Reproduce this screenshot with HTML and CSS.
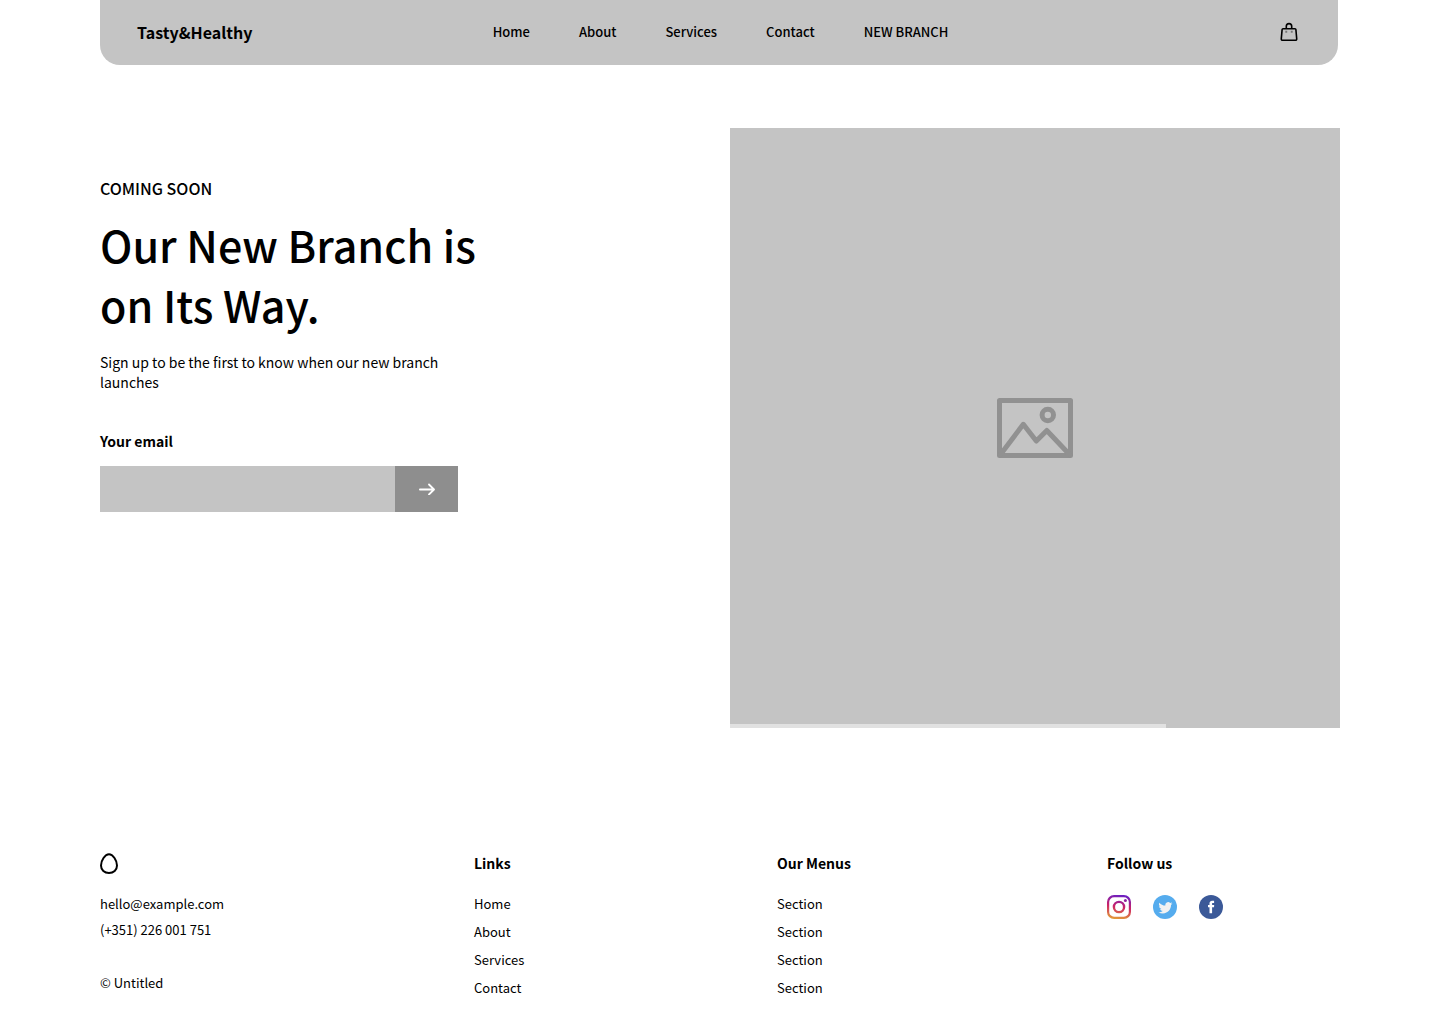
FILE: index.html
```html
<!DOCTYPE html>
<html lang="en">
<head>
<meta charset="utf-8">
<meta name="viewport" content="width=device-width, initial-scale=1">
<title>Tasty&amp;Healthy</title>
<link rel="stylesheet" href="styles.css">
</head>
<body>
<div class="page">
  <header class="header">
    <a class="brand" href="#">Tasty&amp;Healthy</a>
    <nav class="nav" aria-label="Main">
      <a href="#">Home</a>
      <a href="#">About</a>
      <a href="#">Services</a>
      <a href="#">Contact</a>
      <a href="#">NEW BRANCH</a>
    </nav>
    <button class="bag" type="button" aria-label="Shopping bag">
      <svg width="18" height="20" viewBox="0 0 18 20" fill="none" stroke="#000" stroke-width="1.6" stroke-linejoin="round">
        <path d="M3 6.800h12q.8 0 .9.800l.8 9.200q.1 1.500-1.400 1.500H2.700q-1.500 0-1.400-1.500l.8-9.200q.1-.8.900-.8z"/>
        <path d="M6.300 6.800V4.300a2.700 2.700 0 0 1 5.400 0v2.500"/>
        <path d="M5.300 9.700h1.900M10.800 9.700h1.900" stroke="#777" stroke-width="1.900"/>
      </svg>
    </button>
  </header>

  <main class="hero">
    <section class="intro">
      <p class="eyebrow">COMING SOON</p>
      <h1 class="title">Our New Branch is on Its Way.</h1>
      <p class="lead">Sign up to be the first to know when our new branch launches</p>
      <form class="signup">
        <label class="signup-label" for="email">Your email</label>
        <div class="signup-row">
          <input class="signup-input" id="email" type="email">
          <button class="signup-button" type="submit" aria-label="Sign up">
            <svg width="16" height="12" viewBox="0 0 16 12" fill="none" stroke="#fff" stroke-width="1.8" stroke-linecap="round" stroke-linejoin="round">
              <path d="M.9 6.500h14M10 1.500l5 5-5 5"/>
            </svg>
          </button>
        </div>
      </form>
    </section>
    <div class="picture">
      <svg width="76" height="60" viewBox="0 0 76 60" fill="none" stroke="#919191" stroke-width="5" stroke-linejoin="round" stroke-linecap="round">
        <rect x="2.500" y="2.500" width="71" height="55"/>
        <circle cx="50.800" cy="17" r="5.700"/>
        <path d="M3.500 56.500 26.300 26.300 39.300 43 49.800 32.500 72.500 56.500"/>
      </svg>
      <div class="progress"></div>
    </div>
  </main>

  <footer class="footer">
    <div class="contact">
      <svg class="egg" width="18" height="24" viewBox="0 0 18 24" fill="none" stroke="#000" stroke-width="2">
        <path d="M9 3.200C5 3.200 1 9.700 1 14.400 1 19 4.500 22 9 22s8-3 8-7.600C17 9.700 13 3.200 9 3.200z"/>
      </svg>
      <address class="details">
        <a href="mailto:hello@example.com">hello@example.com</a>
        <a href="tel:+351226001751">(+351) 226 001 751</a>
      </address>
      <p class="copyright">© Untitled</p>
    </div>
    <nav aria-labelledby="links">
      <h2 class="heading" id="links">Links</h2>
      <ul class="list">
        <li><a href="#">Home</a></li>
        <li><a href="#">About</a></li>
        <li><a href="#">Services</a></li>
        <li><a href="#">Contact</a></li>
      </ul>
    </nav>
    <nav aria-labelledby="menus">
      <h2 class="heading" id="menus">Our Menus</h2>
      <ul class="list">
        <li><a href="#">Section</a></li>
        <li><a href="#">Section</a></li>
        <li><a href="#">Section</a></li>
        <li><a href="#">Section</a></li>
      </ul>
    </nav>
    <section>
      <h2 class="heading">Follow us</h2>
      <div class="social">
        <a href="#" aria-label="Instagram">
          <svg width="24" height="24" viewBox="0 0 24 24" fill="none">
            <defs>
              <linearGradient id="insta" gradientUnits="userSpaceOnUse" x1="14" y1="0" x2="10" y2="24">
                <stop offset="0" stop-color="#6a1fc4"/>
                <stop offset=".5" stop-color="#cc2366"/>
                <stop offset="1" stop-color="#e29a37"/>
              </linearGradient>
            </defs>
            <rect x="1.100" y="1.100" width="21.800" height="21.800" rx="6" stroke="url(#insta)" stroke-width="2.200"/>
            <circle cx="12" cy="12" r="5.100" stroke="url(#insta)" stroke-width="2.400"/>
            <circle cx="18.400" cy="5.600" r="1.500" fill="url(#insta)"/>
          </svg>
        </a>
        <a href="#" aria-label="Twitter">
          <svg width="24" height="24" viewBox="0 0 24 24">
            <circle cx="12" cy="12" r="12" fill="#55acee"/>
            <path fill="#f1f2f2" transform="translate(5.500 5.800) scale(.58)" d="M23.950 4.570a10 10 0 0 1-2.820.770 4.960 4.960 0 0 0 2.160-2.720c-.950.550-2 .950-3.130 1.180a4.920 4.920 0 0 0-8.380 4.480C7.690 8.090 4.070 6.130 1.640 3.160a4.920 4.920 0 0 0 1.520 6.570 4.900 4.900 0 0 1-2.230-.610v.060a4.920 4.920 0 0 0 3.950 4.830 5 5 0 0 1-2.210.080 4.940 4.940 0 0 0 4.600 3.420A9.870 9.870 0 0 1 0 19.540a13.990 13.990 0 0 0 7.550 2.210c9.050 0 14-7.500 14-13.980 0-.210 0-.420-.020-.630a9.940 9.940 0 0 0 2.460-2.550z"/>
          </svg>
        </a>
        <a href="#" aria-label="Facebook">
          <svg width="24" height="24" viewBox="0 0 24 24">
            <circle cx="12" cy="12" r="12" fill="#3b5998"/>
            <path fill="#fff" d="M15 12.300h-1.900v5.900h-2.600v-5.900H9V9.900h1.500V8.500c0-1.200.6-2.700 2.700-2.700h1.900v2.200h-1.400c-.3 0-.6.100-.6.600v1.300h2.100z"/>
          </svg>
        </a>
      </div>
    </section>
  </footer>
</div>
</body>
</html>
```
FILE: styles.css
```css
* {
  box-sizing: border-box;
}

body {
  margin: 0;
  background: #fff;
  color: #000;
  font: 400 13px/20px "Noto Sans CJK SC", sans-serif;
}

h1, h2, p, ul {
  margin: 0;
  padding: 0;
}

ul {
  list-style: none;
}

a {
  color: inherit;
  text-decoration: none;
}

button {
  padding: 0;
  border: 0;
  background: none;
  cursor: pointer;
}

svg {
  display: block;
}

.page {
  padding: 0 100px;
}

.header {
  display: grid;
  grid-template-columns: 1fr auto 1fr;
  align-items: center;
  margin-right: 2px;
  padding: 20px 40px 21px 37px;
  border-radius: 0 0 20px 20px;
  background: #c4c4c4;
}

.brand {
  font-size: 16px;
  line-height: 24px;
  font-weight: 700;
}

.nav {
  display: flex;
  gap: 49px;
  padding-left: 6px;
  font-weight: 500;
}

.bag {
  justify-self: end;
}

.hero {
  display: grid;
  grid-template-columns: 63fr 61fr;
  margin-top: 63px;
}

.intro {
  padding-top: 48px;
}

.eyebrow {
  font-size: 16px;
  line-height: 24px;
  font-weight: 500;
}

.title {
  max-width: 400px;
  margin: 14px 0 18px;
  font-size: 43px;
  line-height: 60px;
  font-weight: 500;
}

.lead {
  max-width: 358px;
  font-size: 14px;
}

.signup {
  max-width: 358px;
  margin-top: 39px;
}

.signup-label {
  display: block;
  margin-bottom: 15px;
  font-size: 14px;
  font-weight: 700;
}

.signup-row {
  display: flex;
}

.signup-input {
  flex: 1;
  min-width: 0;
  height: 46px;
  padding: 0 16px;
  border: 0;
  border-radius: 0;
  background: #c4c4c4;
  font: inherit;
}

.signup-button {
  display: grid;
  place-items: center;
  width: 63px;
  background: #8e8e8e;
}

.picture {
  position: relative;
  display: grid;
  place-items: center;
  min-height: 600px;
  background: #c4c4c4;
}

.progress {
  position: absolute;
  bottom: 0;
  left: 0;
  width: 436px;
  height: 4px;
  background: #e1e1e1;
}

.footer {
  display: grid;
  grid-template-columns: 374fr 303fr 330fr 233fr;
  padding: 123px 0 22px;
}

.heading {
  font-size: 14px;
  line-height: 24px;
  font-weight: 700;
}

.details {
  display: grid;
  justify-items: start;
  margin-top: 16px;
  font-style: normal;
  line-height: 26px;
}

.copyright {
  margin-top: 30px;
}

.list {
  margin-top: 15px;
  line-height: 28px;
}

.social {
  display: flex;
  gap: 22px;
  margin-top: 20px;
}
```
